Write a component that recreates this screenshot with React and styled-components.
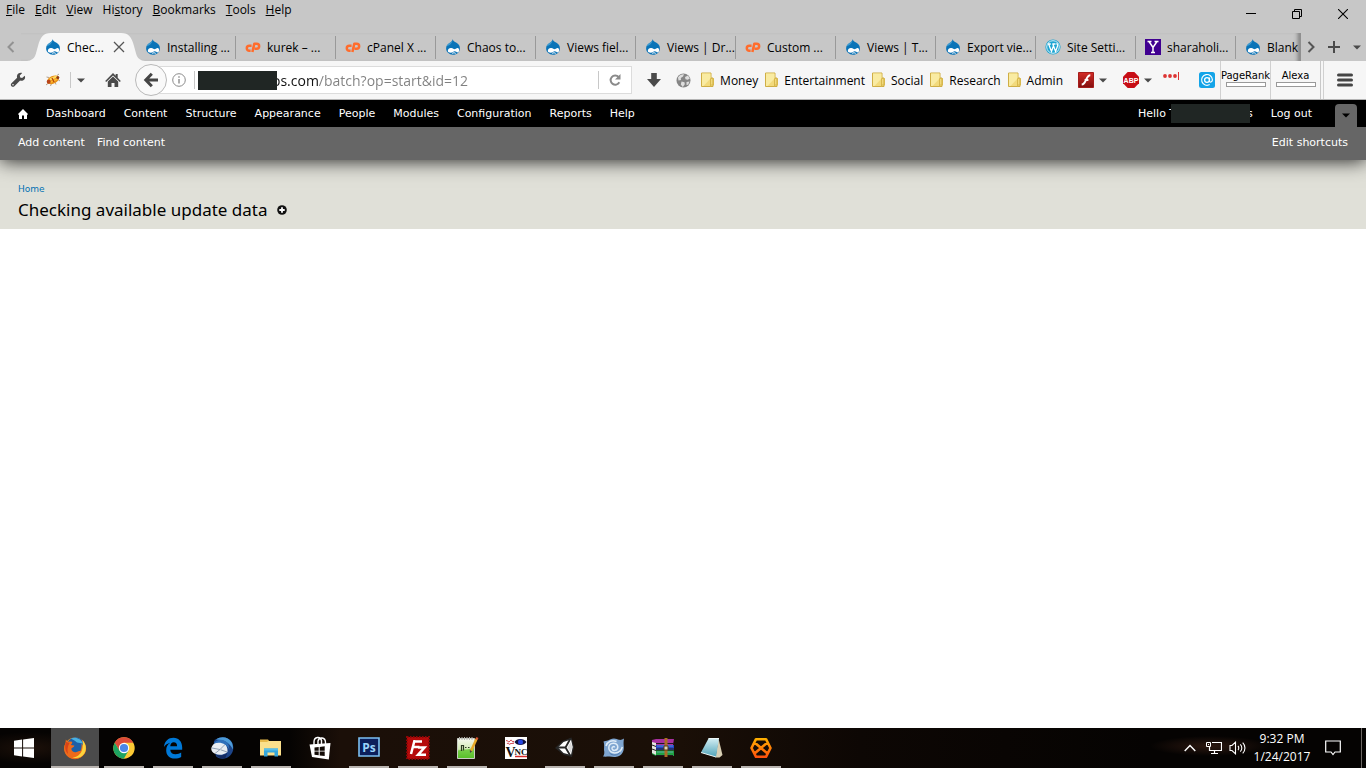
import React from 'react';
import styled, { createGlobalStyle, css } from 'styled-components'

const GlobalStyle = createGlobalStyle`
  * {
    box-sizing: border-box;
  }
  body {
    margin: 0;
    background: #fff;
    font-family: "Open Sans", "Noto Sans", sans-serif;
    font-size: 12px;
    color: #000;
  }
  button {
    font: inherit;
    color: inherit;
    background: none;
    border: 0;
    padding: 0;
  }
  a {
    color: inherit;
    text-decoration: none;
  }
  ul {
    list-style: none;
    margin: 0;
    padding: 0;
  }
  svg {
    display: block;
    flex: none;
  }
`

const Screen = styled.div`
  min-height: 100vh;
  display: flex;
  flex-direction: column;
`

/* ---------- browser window ---------- */

const Chrome = styled.header`
  position: relative;
  z-index: 2;
  background: #c7c7c7;
`

const TitleBar = styled.div`
  display: flex;
  justify-content: space-between;
  height: 33px;
`

const MenuBar = styled.ul`
  display: flex;
  gap: 10px;
  padding: 2px 6px;
  line-height: 16px;
`

const WindowButtons = styled.div`
  display: flex;
  height: 28px;
`

const WindowButton = styled.button`
  width: 46px;
  display: grid;
  place-items: center;
`

const TabStrip = styled.div`
  display: flex;
  height: 28px;
`

const StripButton = styled.button`
  width: ${props => props.$width}px;
  display: grid;
  place-items: center;
`

const Tabs = styled.ul`
  flex: 1;
  min-width: 0;
  display: flex;
  padding-left: 15px;
  overflow: hidden;
  border-right: 2px solid #8f8f8f;
  box-shadow: inset -4px 0 4px -3px #777;
`

const Tab = styled.li`
  position: relative;
  flex: none;
  width: 100px;
  display: flex;
  align-items: center;
  gap: 5px;
  padding-left: 9px;
  white-space: nowrap;

  ${props => !props.$active && css`
    &::after {
      content: '';
      position: absolute;
      right: 0;
      top: 3px;
      bottom: 2px;
      width: 1px;
      background: #999;
    }
  `}
`

const TabShape = styled.svg`
  position: absolute;
  left: -9px;
  top: 0;
`

const TabLink = styled.a`
  position: relative;
  display: flex;
  align-items: center;
  gap: 6px;
`

const TabClose = styled.button`
  position: relative;
  margin-left: 4px;
`

const Toolbar = styled.div`
  display: flex;
  align-items: center;
  height: 39px;
  background: #f6f6f6;
  border-bottom: 1px solid #b4b4b4;
`

const ToolButton = styled.button`
  flex: none;
  width: ${props => props.$width}px;
  display: flex;
  align-items: center;
  justify-content: center;
  gap: 5px;
`

const Divider = styled.span`
  flex: none;
  width: 1px;
  height: ${props => props.$height}px;
  background: #c8c8c8;
`

const BackButton = styled.button`
  position: relative;
  z-index: 1;
  flex: none;
  width: 32px;
  height: 32px;
  display: grid;
  place-items: center;
  border: 1px solid #b9b9b9;
  border-radius: 50%;
  background: #f9f9f9;
`

const AddressBar = styled.form`
  flex: 1;
  min-width: 0;
  height: 28px;
  display: flex;
  align-items: center;
  margin-left: -14px;
  padding-left: 14px;
  background: #fff;
  border: 1px solid #dcdcdc;
`

const Redacted = styled.span`
  position: relative;
  flex: none;
  width: 79px;
  height: 19px;
  background: #202624;
`

/* the host is dark, the path after it is grey */
const AddressInput = styled.input`
  flex: 1;
  min-width: 0;
  height: 24px;
  margin-left: -5px;
  padding: 0;
  border: 0;
  outline: 0;
  font: 14px "Open Sans", "Noto Sans", sans-serif;
  color: transparent;
  background: linear-gradient(90deg, #111 46px, #808080 46px);
  background-clip: text;
  -webkit-background-clip: text;
`

const Bookmarks = styled.ul`
  display: flex;
  gap: 6px;
  padding: 0 3px 0 9px;
`

const BookmarkLink = styled.a`
  display: flex;
  align-items: center;
  gap: 5px;
`

const RankBox = styled.div`
  flex: none;
  width: 50px;
  height: 38px;
  padding: 8px 0;
  border-left: 1px solid #d0d0d0;
  font: 10px/13px "DejaVu Sans", sans-serif;
  text-align: center;
  display: flex;
  flex-direction: column;
  align-items: center;
`

const RankMeter = styled.span`
  width: 40px;
  height: 5px;
  border: 1px solid #999;
  background: #fff;
`

const MenuButton = styled(ToolButton)`
  height: 38px;
  margin-left: 2px;
  border-left: 1px solid #d0d0d0;
`

/* ---------- drupal page ---------- */

const AdminToolbar = styled.div`
  position: relative;
  z-index: 1;
  font: 11px "DejaVu Sans", Verdana, sans-serif;
  color: #fff;
  box-shadow: 0 1px 18px rgba(0, 0, 0, 0.85);
`

const AdminBar = styled.nav`
  display: flex;
  justify-content: space-between;
  height: 27px;
  padding: 0 9px 0 18px;
  background: #000;
`

const AdminLinks = styled.ul`
  display: flex;
  align-items: center;
  gap: 18px;
`

const UserItem = styled.li`
  display: flex;
  align-items: center;

  ${Redacted} {
    margin: 0 -3px 0 -5px;
    z-index: 1;
  }
`

const ToggleItem = styled.li`
  align-self: flex-end;
  width: 22px;
  height: 23px;
  margin-left: 5px;
  display: grid;
  place-items: center;
  border-radius: 4px 4px 0 0;
  background: #666;
`

const ShortcutBar = styled.nav`
  display: flex;
  justify-content: space-between;
  height: 33px;
  padding: 9px 18px;
  line-height: 14px;
  background: #666;
`

const ShortcutLinks = styled.ul`
  display: flex;
  gap: 12px;
`

const PageHeader = styled.div`
  height: 69px;
  padding: 22px 18px 0;
  background: #e0e0d8;
`

const Breadcrumb = styled.a`
  display: block;
  font: 9px/14px "DejaVu Sans", Verdana, sans-serif;
  color: #0071b3;
`

const TitleRow = styled.div`
  display: flex;
  align-items: center;
  gap: 10px;
  margin-top: 3px;
`

const PageTitle = styled.h1`
  margin: 0;
  font: 17px/22px "Noto Sans", "Open Sans", sans-serif;
  color: #000;
`

const PageContent = styled.main`
  flex: 1;
  background: #fff;
`

/* ---------- taskbar ---------- */

const Taskbar = styled.footer`
  display: flex;
  justify-content: space-between;
  height: 40px;
  color: #fff;
  background:
    radial-gradient(ellipse 60px 10px at 1210px 18px, #2c1810, transparent),
    radial-gradient(ellipse 60px 16px at 30px 20px, #1c1009, transparent),
    linear-gradient(90deg, #050302 0, #050302 290px, #1b0f08 340px, #1a0f07 680px, #0d0704 860px, #050302 1150px);
`

const TaskList = styled.ul`
  display: flex;
  gap: 1px;
`

const TaskButton = styled.button`
  position: relative;
  width: ${props => (props.$start ? 50 : 48)}px;
  height: 40px;
  display: grid;
  place-items: center;
  padding-right: ${props => (props.$start ? 2 : 0)}px;
  background: ${props => (props.$active ? '#4b4b4b' : 'none')};

  ${props => props.$open && css`
    &::after {
      content: '';
      position: absolute;
      bottom: 0;
      left: ${props.$active ? 0 : 4}px;
      right: ${props.$active ? 0 : 4}px;
      height: 2px;
      background: #b9b4b0;
    }
  `}
`

const Tray = styled.div`
  display: flex;
  align-items: center;
`

const TrayButton = styled.button`
  width: ${props => props.$width}px;
  height: 40px;
  display: grid;
  place-items: center;
`

const Clock = styled.div`
  width: 64px;
  line-height: 18px;
  text-align: center;
`

const ShowDesktop = styled.button`
  width: 5px;
  height: 40px;
  border-left: 1px solid #6b6663;
`

/* ---------- icons ---------- */

const DrupalIcon = () => (
  <svg width="16" height="16" viewBox="0 0 16 16">
    <path d="M7.600.300C8 2 9.500 2.600 11.500 3.700 14 5.200 15 7 14.900 9.400 14.800 13 12 15.600 8 15.700 4 15.700 1.200 13 1.100 9.600 1 6.500 3 4.900 4.900 3.700 6.500 2.700 7.300 2 7.600.300z" fill="#0a74b8" />
    <path d="M7.600.300C7.300 2 6.500 2.700 4.900 3.700 3.500 4.600 2.200 5.700 1.500 7.300 4 6.500 7.500 5 7.600.300z" fill="#3f9bd0" />
    <path d="M2.800 12c0-2.300 1.900-3.300 3.600-3 1.500.1 2.300 1.200 3.100 1.200s2-1.500 3.300-1.300c1.700.3 1.700 3.800.3 4.400-1.100.5-2.100-1.100-3.300-1.100-1.300 0-2.300 1.500-4 1.500-1.600 0-3-.5-3-1.700z" fill="#fff" />
    <path d="M7.200 14.400c1-.8 2.500-.8 3.500 0" fill="none" stroke="#fff" strokeWidth="1" />
  </svg>
)

const CpanelIcon = () => (
  <svg width="16" height="16" viewBox="0 0 16 16" fill="none" stroke="#ff6c2c" strokeWidth="2.500">
    <path d="M6.600 6.800H4.300a2.500 2.500 0 0 0 0 5h1.300M7.400 13L9.300 4.800h2.400a2.400 2.400 0 0 1 0 4.900H9.600" strokeLinejoin="round" />
  </svg>
)

const WordpressIcon = () => (
  <svg width="16" height="16" viewBox="0 0 16 16">
    <circle cx="8" cy="8" r="7.600" fill="#1ea5d2" />
    <circle cx="8" cy="8" r="6.300" fill="none" stroke="#fff" strokeWidth=".8" />
    <path d="M2.800 5h3M7.300 5h3.200M3.600 5l2.900 7.400L8.200 7.500M7.800 5l2.800 7.400 2-5.500c.3-1-.6-1.700-.9-2.700" fill="none" stroke="#fff" strokeWidth="1.300" />
  </svg>
)

const YahooIcon = () => (
  <svg width="16" height="16" viewBox="0 0 16 16">
    <path d="M0 0h16v16H0z" fill="#400090" />
    <path d="M2.500 2.500h4M9.500 2.500h4M4 2.500l4 6 4-6M8 8v5.500M6 13.500h4" fill="none" stroke="#fff" strokeWidth="1.500" />
  </svg>
)

const Caret = ({ fill = '#4a4a4a' }) => (
  <svg width="8" height="5" viewBox="0 0 8 5"><path d="M0 .5h8L4 4.500z" fill={fill} /></svg>
)

const FolderIcon = () => (
  <svg width="15" height="16" viewBox="0 0 15 16">
    <path d="M1.500 1h9.500v5h2v8.500H1.500z" fill="#f2da7c" stroke="#cfae45" />
    <path d="M2 1.500h8.500v5L3.500 14H2z" fill="#f9eba2" />
    <path d="M10.500 6.500v8M10.500 6.500h3v6.500h-3" fill="none" stroke="#d8b84d" />
  </svg>
)

const WrenchIcon = () => (
  <svg width="16" height="16" viewBox="0 0 16 16">
    <path d="M14.700 3.700l-2.600 2.200-1.900-.5-.4-1.900L12.200 1C10.300.4 8.200 1 7.300 2.800c-.5 1-.5 2-.2 3L1.500 11.300c-.9.9-.9 2 0 2.900s2.100.8 2.900 0l5.700-5.600c1.500.5 3.200.1 4.200-1.100.9-1 1.100-2.500.4-3.800zM3 13.600a.8.8 0 1 1 0-1.600.8.8 0 0 1 0 1.600z" fill="#4a4a4a" />
  </svg>
)

const BugIcon = () => (
  <svg width="16" height="14" viewBox="0 0 16 14">
    <path d="M3.500 10L1 12M6.500 10.500l-1 2.500M10 9l1 2.500M13 6.500l2 1.500M4 4.500L1.500 4M12 2.500L14 1" stroke="#a08a70" strokeWidth=".8" />
    <ellipse cx="8" cy="6.800" rx="6.400" ry="3.800" transform="rotate(-24 8 6.800)" fill="#e8921a" />
    <path d="M4.500 5.500l6.500-3 2.500 1.300-8 3.700z" fill="#ffd95c" />
    <path d="M5 9.500l7-3.500" stroke="#ffb92e" strokeWidth="1.500" />
    <path d="M7 5l2 4" stroke="#b3450f" strokeWidth="1.200" />
    <circle cx="3.700" cy="8.800" r="2" fill="#b8431a" />
    <circle cx="12.800" cy="4.400" r="1.500" fill="#8f3a14" />
  </svg>
)

const HomeIcon = () => (
  <svg width="16" height="16" viewBox="0 0 16 16" fill="#4a4a4a">
    <path d="M8 1l2.700 2.700V2h2v3.700L15.800 9l-1 1L8 3.400 1.200 10l-1-1z" />
    <path d="M8 4.600l5.200 5V15H9.500v-4h-3v4H2.800V9.600z" />
  </svg>
)

const BackIcon = () => (
  <svg width="16" height="16" viewBox="0 0 16 16" fill="none" stroke="#454545" strokeWidth="3">
    <path d="M8.800 1.800L2.800 8l6 6.200M3.500 8H15" />
  </svg>
)

const InfoIcon = () => (
  <svg width="14" height="14" viewBox="0 0 14 14" fill="none" stroke="#8b8b8b">
    <circle cx="7" cy="7" r="6.300" />
    <path d="M7 6v4.500M7 3.200v1.600" strokeWidth="1.400" />
  </svg>
)

const ReloadIcon = () => (
  <svg width="14" height="14" viewBox="0 0 14 14">
    <path d="M11.300 9.300A4.600 4.600 0 1 1 10.600 4" fill="none" stroke="#8a8a8a" strokeWidth="2" />
    <path d="M12.500 1v5.500H7z" fill="#8a8a8a" />
  </svg>
)

const DownloadIcon = () => (
  <svg width="16" height="16" viewBox="0 0 16 16"><path d="M5.200 1h5.600v6H15l-7 8-7-8h4.200z" fill="#4a4a4a" /></svg>
)

const GlobeIcon = () => (
  <svg width="15" height="15" viewBox="0 0 15 15">
    <circle cx="7.500" cy="7.500" r="7" fill="#858585" />
    <path d="M2 4.500C3.500 2 6 1 8 1.200L7 3.500 4.800 5 5 7 2.500 7.500zM9 4l3-1.500 1.800 3-2 1.300-2.300-.6zM5.500 8.500l3 .8.300 2-2 2.700-2-2.500zM10.500 9l3-.5-1.300 3.300-1.700.2z" fill="#dedede" />
  </svg>
)

const FlashIcon = () => (
  <svg width="16" height="16" viewBox="0 0 16 16">
    <defs>
      <linearGradient id="flash" x1="0" y1="0" x2="0" y2="1">
        <stop offset="0" stopColor="#d42b26" />
        <stop offset="1" stopColor="#820f0f" />
      </linearGradient>
    </defs>
    <path d="M.5.500h15v15H.5z" fill="url(#flash)" stroke="#a51d1b" />
    <path d="M12.300 3.300c-4.500 0-4 9-8.600 9.200M6.600 8.100h3.800" fill="none" stroke="#fff" strokeWidth="2" />
  </svg>
)

const AdblockIcon = () => (
  <svg width="16" height="16" viewBox="0 0 16 16">
    <path d="M4.700 0h6.600L16 4.700v6.600L11.300 16H4.700L0 11.300V4.700z" fill="#c70d15" />
    <text x="8" y="10.700" fill="#fff" fontSize="7" fontWeight="700" fontFamily="Liberation Sans" textAnchor="middle">ABP</text>
  </svg>
)

const DotsIcon = () => (
  <svg width="24" height="16" viewBox="0 0 24 16">
    <g fill="#dd3433">
      <circle cx="2" cy="4" r="1.900" />
      <circle cx="7" cy="4" r="1.900" />
      <circle cx="12" cy="4" r="1.900" />
      <path d="M15 0h1v8h-1z" />
    </g>
  </svg>
)

const AtIcon = () => (
  <svg width="16" height="16" viewBox="0 0 16 16">
    <rect width="16" height="16" rx="2.500" fill="#13a4e8" />
    <circle cx="8" cy="8" r="2.400" fill="none" stroke="#fff" strokeWidth="1.300" />
    <path d="M10.500 5.500v3.700c.3 1.500 2.900 1 2.900-1.400A5.400 5.400 0 1 0 10.700 12.600" fill="none" stroke="#fff" strokeWidth="1.200" />
  </svg>
)

const BurgerIcon = () => (
  <svg width="16" height="14" viewBox="0 0 16 14"><path d="M1.500 2h13M1.500 7h13M1.500 12h13" stroke="#454545" strokeWidth="3" strokeLinecap="round" /></svg>
)

const WindowsIcon = () => (
  <svg width="20" height="20" viewBox="0 0 20 20" fill="#fff">
    <path d="M0 2.700l8.100-1.100v7.900H0zM9.100 1.500L20 0v9.500H9.100zM0 10.500h8.100v7.900L0 17.300zM9.100 10.500H20V20L9.100 18.500z" />
  </svg>
)

const FirefoxIcon = () => (
  <svg width="24" height="24" viewBox="0 0 24 24">
    <circle cx="12" cy="12.300" r="10.700" fill="#f08a1d" />
    <circle cx="12.500" cy="9.800" r="8.600" fill="#1c5fa8" />
    <path d="M8 2.500c5-2 10 .5 12 5l-6-1c-2-2-4-2.500-6-4z" fill="#49b0e0" />
    <path d="M19 3.600c4 3.800 5.500 9.500 2.600 14.200C18.500 23 12 24.500 7 22c-5.500-2.800-7.500-9.300-4.500-15l.3-3.500L5 6c1.500-.6 3-.4 4.300 0 0 1-.5 2-1.500 3l3.500.5c.2 1.500-2.300 2-3 3.300.3 2.700 2.700 4 5.200 3.300 1.500-.5 2.500-1.500 4-1 .8-3 1.500-5 .8-7.500 1 .7 1.400 1.600 1.700 2.500.3-2.500-.2-4.800-1-6.500z" fill="#ee6a1b" />
    <path d="M19.500 4c3.500 4 4.500 9 2 13.300-2.800 4.500-8 5.700-12 4.200 6-.2 10-5 10.200-11.500.2-2 .3-4-.2-6z" fill="#fbd43c" />
    <path d="M3 6c-1.500 4-.8 9 2 12-1-4-.5-8 1.500-11z" fill="#d94318" />
  </svg>
)

const ChromeIcon = () => (
  <svg width="22" height="22" viewBox="0 0 22 22">
    <circle cx="11" cy="11" r="10.700" fill="#fcc934" />
    <path d="M1.700 5.700A10.700 10.700 0 0 1 20.300 5.700H11L6.400 13.600z" fill="#dd4b39" />
    <path d="M1.700 5.700A10.700 10.700 0 0 0 10.800 21.700L15.600 13.600 6.400 13.600z" fill="#1da462" />
    <circle cx="11" cy="11" r="5.200" fill="#fff" />
    <circle cx="11" cy="11" r="4.100" fill="#4a86e8" />
  </svg>
)

const EdgeIcon = () => (
  <svg width="20" height="22" viewBox="0 0 22 22" preserveAspectRatio="none">
    <path d="M1 10C1.700 4 6 .7 11.500.7c5.800 0 9.600 3.900 9.600 9.500v2.500H8c.2 3 2.600 4.500 5.800 4.500 2.400 0 4.300-.6 6.200-1.700v4.400c-2 1.100-4.400 1.600-7 1.600-6 0-9.500-3.300-9.500-8.300 0-3.400 1.700-5.800 4.500-7.400C5 6.500 2.600 8 1 10zm7-.8h7.500c0-2.500-1.300-4-3.700-4C9.600 5.200 8.300 6.700 8 9.200z" fill="#0078d7" />
  </svg>
)

const ThunderbirdIcon = () => (
  <svg width="24" height="24" viewBox="0 0 24 24">
    <path d="M4 5C9-.5 18 .3 21.700 6c2.600 4.200 2 10-1.500 13.600-4 4-10 4.300-14 1L3.500 12z" fill="#1d4488" />
    <path d="M6 3.500C11-.5 18.500.8 21.500 6c1.200 2.200 1.700 5 1.200 7.500C20.500 7.500 14.500 3.500 6 3.500z" fill="#4d9bd8" />
    <path d="M1.300 12.500c.5-4 5-7.300 9.700-6.700 4.200.5 7 5.200 6.500 10.200-3.500 3-8.500 3.700-12.500 1.700-2.500-1.200-4-3-3.700-5.200z" fill="#e9edf2" />
    <path d="M2 12l8 1.500 5.500-5.500M10 13.500l-5 4M10.500 13.700l6.500 2.300" fill="none" stroke="#8898ad" strokeWidth=".9" />
    <path d="M4 7.500C7 2.500 15 2.500 18.500 8.500l1 5.500C16.500 8 11 5.500 4 7.500z" fill="#2f70ba" />
    <path d="M6 18.600c4 1.700 8.500 1 11.300-1.800l-1.800 5C12 23.500 8 22 6 18.600z" fill="#142a60" />
  </svg>
)

const ExplorerIcon = () => (
  <svg width="22" height="20" viewBox="0 0 22 20">
    <path d="M0 1.500h8l1.500 2H20V6H0z" fill="#e8b94a" />
    <path d="M0 4h7l1.500-1H21v14.500H0z" fill="#fbe08c" />
    <path d="M4 10.500h14V18.500h-3.500v-4h-7v4H4z" fill="#35a7dc" />
    <path d="M4 10.500h14v2H4z" fill="#59bfe9" />
  </svg>
)

const StoreIcon = () => (
  <svg width="22" height="24" viewBox="0 0 22 24">
    <path d="M5 9V6c0-5.500 6.500-6 7.500-1.500V8M9 8V5c1-4.500 7.500-4 7.500 1.500V8" fill="none" stroke="#fff" strokeWidth="1.400" />
    <path d="M.5 8.500L21.500 7l-1.700 16.500L3 21z" fill="#fff" />
    <path d="M5.500 11.500l4.200-.5v3.700H5.500zM10.700 10.900l5-.6v4.400h-5zM5.500 15.600h4.200v3.700l-4.200-.5zM10.700 15.600h5V20l-5-.6z" fill="#130b06" />
  </svg>
)

const PhotoshopIcon = () => (
  <svg width="22" height="22" viewBox="0 0 22 22">
    <path d="M1 1h20v18H1z" fill="#0c1f5c" stroke="#7cc0f2" strokeWidth="1.600" />
    <text x="11" y="14.500" fill="#9bd3fb" fontSize="12" fontWeight="700" fontFamily="Open Sans" textAnchor="middle">Ps</text>
  </svg>
)

const FilezillaIcon = () => (
  <svg width="24" height="24" viewBox="0 0 24 24">
    <path d="M1 1h22v22H1z" fill="#b50a0a" stroke="#8e0606" strokeWidth="2" strokeDasharray="1.500 1.500" />
    <path d="M7.500 5.500H16M8.500 4.500L5 18M6.500 11h7M12 11.500h6.500L12 18.800h8" fill="none" stroke="#fff" strokeWidth="2.500" />
  </svg>
)

const NotepadPlusIcon = () => (
  <svg width="24" height="24" viewBox="0 0 24 24">
    <defs>
      <linearGradient id="npp" x1="0" y1="0" x2="0" y2="1">
        <stop offset="0" stopColor="#f6f8f0" />
        <stop offset=".5" stopColor="#d5ecb8" />
        <stop offset="1" stopColor="#3fae1e" />
      </linearGradient>
    </defs>
    <path d="M2.500 2.500h17V22.500h-17z" fill="url(#npp)" stroke="#c9cdc4" />
    <path d="M3 14.500c6-1.500 11-.5 16-3v10.500H3z" fill="#5fc52c" opacity=".75" />
    <path d="M4.500 1v3M7 1v3M9.500 1v3M12 1v3M14.500 1v3M17 1v3" stroke="#b5b5b0" />
    <path d="M6.500 9v6M6.500 9.500h2v5M10 11.500h1.500M13 11.500h1.500" fill="none" stroke="#2d3b22" strokeWidth="1.200" />
    <path d="M21.500 3L16 15" stroke="#e7a928" strokeWidth="2.500" />
    <path d="M21 2l2 1" stroke="#d85332" strokeWidth="2" />
    <path d="M15 17l-.2-3 2.300 1.200z" fill="#444" />
  </svg>
)

const VncIcon = () => (
  <svg width="24" height="24" viewBox="0 0 24 24">
    <path d="M1 1h22v22H1z" fill="#fff" />
    <path d="M10.500 6c2-4 9.500-4 12 0-2.500 4-10 4-12 0z" fill="#10103c" />
    <circle cx="16.500" cy="6" r="2.500" fill="#2545e0" />
    <path d="M2 5c2-2 2 3 4 0s2 3 4 0M3 8c1-2 2 1 3 0s2 0 4-1" fill="none" stroke="#c8202b" />
    <text x="1.500" y="21" fill="#111" fontSize="14" fontWeight="700" fontFamily="Liberation Serif">V</text>
    <text x="10.500" y="18.500" fill="#111" fontSize="9" fontWeight="700" fontFamily="Liberation Serif">NC</text>
    <path d="M11 20.500h12" stroke="#d62a2a" strokeWidth="1.500" />
  </svg>
)

const UnityIcon = () => (
  <svg width="22" height="22" viewBox="0 0 22 22">
    <path d="M17.500.5L20 10l-2 10-8-2L1 11l7.500-7z" fill="#262626" />
    <path d="M17 2.500L18.700 10 17 18l-7.500-2L4 10.500 9.500 5z" fill="#fff" />
    <path d="M3 10.500h8.500M11.500 10.500l5-9M11.500 10.500l5 8.500" stroke="#262626" strokeWidth="1.800" />
    <path d="M13.500 10.500L16.700 5 18.300 10 16.700 16z" fill="#d9d9d9" />
  </svg>
)

const SwirlIcon = () => (
  <svg width="22" height="22" viewBox="0 0 22 22">
    <path d="M.5 4.500C3 4 5 3.500 7 2.500c4-2 7-.5 9 .3 1.600.5 3.500-.3 5-1.300-.5 3-.5 5-.3 7.500.5 4-.7 8-4.700 10-4 1.700-7 .7-9.500.5-2 0-4.500.3-6.500 0 1.500-2 1.500-4 1-6.500C1 10 1.500 7 .5 4.500z" fill="#7fa6d1" />
    <path d="M11.500 10.500c0-1.500-2.500-1-2.500.8 0 3.200 5.800 2.700 5.800-1.300 0-5.200-9-5-9 1 0 6.500 11.500 7 13.500-1M3 9C4.500 4.500 9 2.500 13.500 4.500" fill="none" stroke="#dfecf8" strokeWidth="1.500" />
    <path d="M6.500 16c3 3 8 2.500 10.500-.5" fill="none" stroke="#4a78ae" />
  </svg>
)

const WinrarIcon = () => (
  <svg width="24" height="20" viewBox="0 0 24 20">
    <path d="M1 2l4-1h18l-1 6H1z" fill="#a8309f" />
    <path d="M1 7h22v5H1z" fill="#2447c7" />
    <path d="M1 12.500h22V18H5l-4-2z" fill="#21a344" />
    <path d="M1 4l4 1v12l-4-2z" fill="#e5e5df" />
    <path d="M5 5.500h18M5 11h18M5 17.500h17M1 7l4 1.500M1 11l4 1.500" stroke="#201a20" />
    <path d="M6 8h16M6 14h16" stroke="#86b7ed" strokeWidth=".6" />
    <path d="M13.500 0h3v19h-3z" fill="#ad6d25" />
    <path d="M13 8h4v4h-4z" fill="#ddd5b8" stroke="#5a3c17" />
  </svg>
)

const NotepadIcon = () => (
  <svg width="24" height="24" viewBox="0 0 24 24">
    <defs>
      <linearGradient id="pad" x1="0" y1="0" x2="0" y2="1">
        <stop offset="0" stopColor="#d3eef3" />
        <stop offset="1" stopColor="#4fa3b8" />
      </linearGradient>
    </defs>
    <path d="M18.500 2.500L22.500 19l-3 2.500h-4z" fill="#d8cfb4" />
    <path d="M8.500 2.500h10.500L16 21 1 16.500z" fill="url(#pad)" />
    <path d="M8.500 2.500h10.500M1 16.500L16 21" stroke="#edf8f8" />
  </svg>
)

const XIcon = () => (
  <svg width="24" height="22" viewBox="0 0 24 22">
    <defs>
      <linearGradient id="xgrad" gradientUnits="userSpaceOnUse" x1="0" y1="1" x2="0" y2="21">
        <stop offset="0" stopColor="#ffb300" />
        <stop offset="1" stopColor="#ff4d0d" />
      </linearGradient>
    </defs>
    <path d="M7 2.200h10L21.500 11 17 19.800H7L2.500 11zM5.500 5.500l13 11M18.500 5.500l-13 11" fill="none" stroke="url(#xgrad)" strokeWidth="2.600" strokeLinejoin="round" />
  </svg>
)

/* ---------- data ---------- */

// [text before the access key, access key, text after it]
const menus = [
  ['', 'F', 'ile'],
  ['', 'E', 'dit'],
  ['', 'V', 'iew'],
  ['Hi', 's', 'tory'],
  ['', 'B', 'ookmarks'],
  ['', 'T', 'ools'],
  ['', 'H', 'elp'],
]

const tabs = [
  { title: 'Chec...', Icon: DrupalIcon, active: true },
  { title: 'Installing ...', Icon: DrupalIcon },
  { title: 'kurek – ...', Icon: CpanelIcon },
  { title: 'cPanel X ...', Icon: CpanelIcon },
  { title: 'Chaos to...', Icon: DrupalIcon },
  { title: 'Views fiel...', Icon: DrupalIcon },
  { title: 'Views | Dr...', Icon: DrupalIcon },
  { title: 'Custom ...', Icon: CpanelIcon },
  { title: 'Views | T...', Icon: DrupalIcon },
  { title: 'Export vie...', Icon: DrupalIcon },
  { title: 'Site Setti...', Icon: WordpressIcon },
  { title: 'sharaholi...', Icon: YahooIcon },
  { title: 'Blank', Icon: DrupalIcon },
]

const bookmarks = ['Money', 'Entertainment', 'Social', 'Research', 'Admin']

const adminLinks = ['Dashboard', 'Content', 'Structure', 'Appearance', 'People', 'Modules', 'Configuration', 'Reports', 'Help']

const tasks = [
  { name: 'Firefox', Icon: FirefoxIcon, open: true, active: true },
  { name: 'Chrome', Icon: ChromeIcon, open: true },
  { name: 'Edge', Icon: EdgeIcon, open: true },
  { name: 'Thunderbird', Icon: ThunderbirdIcon, open: true },
  { name: 'File Explorer', Icon: ExplorerIcon, open: true },
  { name: 'Store', Icon: StoreIcon },
  { name: 'Photoshop', Icon: PhotoshopIcon, open: true },
  { name: 'FileZilla', Icon: FilezillaIcon, open: true },
  { name: 'Notepad++', Icon: NotepadPlusIcon, open: true },
  { name: 'VNC', Icon: VncIcon },
  { name: 'Unity', Icon: UnityIcon, open: true },
  { name: 'Nautilus', Icon: SwirlIcon, open: true },
  { name: 'WinRAR', Icon: WinrarIcon, open: true },
  { name: 'Notepad', Icon: NotepadIcon, open: true },
  { name: 'XAMPP', Icon: XIcon, open: true },
]

function BrowserChrome() {
  return (
    <Chrome>
      <TitleBar>
        <MenuBar>
          {menus.map(([before, key, after]) => (
            <li key={key + after}><button>{before}<u>{key}</u>{after}</button></li>
          ))}
        </MenuBar>
        <WindowButtons>
          <WindowButton aria-label='Minimize'>
            <svg width="10" height="10" viewBox="0 0 10 10"><path d="M0 4.500h10" stroke="#000" /></svg>
          </WindowButton>
          <WindowButton aria-label='Restore'>
            <svg width="10" height="10" viewBox="0 0 10 10" fill="none" stroke="#000"><path d="M.5 2.500h7v7h-7zM2.500 2.500v-2h7v7h-2" /></svg>
          </WindowButton>
          <WindowButton aria-label='Close'>
            <svg width="10" height="10" viewBox="0 0 10 10"><path d="M0 0l10 10M10 0L0 10" stroke="#000" strokeWidth="1.100" /></svg>
          </WindowButton>
        </WindowButtons>
      </TitleBar>

      <TabStrip>
        <StripButton $width={21} aria-label='Scroll tabs left'>
          <svg width="8" height="12" viewBox="0 0 8 12"><path d="M6.500 1L1.500 6l5 5" fill="none" stroke="#929292" strokeWidth="2" /></svg>
        </StripButton>
        <Tabs>
          {tabs.map(({ title, Icon, active }, i) => (
            <Tab key={i} $active={active}>
              {active && (
                <TabShape width="118" height="28" viewBox="0 0 118 28">
                  <path d="M0 28c9-1 8.500-7 11-15C13.500 4 16 0 24 0h70c8 0 10.500 4 13 13 2.500 8 2 14 11 15z" fill="#f6f6f6" />
                </TabShape>
              )}
              <TabLink href='#'><Icon />{title}</TabLink>
              {active && (
                <TabClose aria-label='Close tab'>
                  <svg width="12" height="12" viewBox="0 0 12 12"><path d="M1 1l10 10M11 1L1 11" stroke="#555" strokeWidth="1.300" /></svg>
                </TabClose>
              )}
            </Tab>
          ))}
        </Tabs>
        <StripButton $width={20} aria-label='Scroll tabs right'>
          <svg width="8" height="12" viewBox="0 0 8 12"><path d="M1.500 1l5 5-5 5" fill="none" stroke="#555" strokeWidth="2" /></svg>
        </StripButton>
        <StripButton $width={26} aria-label='New tab'>
          <svg width="12" height="12" viewBox="0 0 12 12"><path d="M6 0v12M0 6h12" stroke="#4a4a4a" strokeWidth="2" /></svg>
        </StripButton>
        <StripButton $width={19} aria-label='List all tabs'><Caret /></StripButton>
      </TabStrip>

      <Toolbar>
        <ToolButton $width={36} aria-label='Developer tools'><WrenchIcon /></ToolButton>
        <ToolButton $width={34} aria-label='Firebug'><BugIcon /></ToolButton>
        <Divider $height={16} />
        <ToolButton $width={20} aria-label='Firebug options'><Caret /></ToolButton>
        <ToolButton $width={44} aria-label='Home'><HomeIcon /></ToolButton>
        <BackButton aria-label='Back'><BackIcon /></BackButton>
        <AddressBar onSubmit={e => e.preventDefault()}>
          <ToolButton $width={22} type='button' aria-label='Site information'><InfoIcon /></ToolButton>
          <ToolButton as='span' $width={8}><Divider $height={18} /></ToolButton>
          <Redacted />
          <AddressInput aria-label='Address' defaultValue='os.com/batch?op=start&id=12' />
          <Divider $height={18} />
          <ToolButton $width={32} type='button' aria-label='Reload'><ReloadIcon /></ToolButton>
        </AddressBar>
        <ToolButton $width={43} aria-label='Downloads'><DownloadIcon /></ToolButton>
        <ToolButton $width={16} aria-label='Web'><GlobeIcon /></ToolButton>
        <Bookmarks>
          {bookmarks.map(name => (
            <li key={name}><BookmarkLink href='#'><FolderIcon />{name}</BookmarkLink></li>
          ))}
        </Bookmarks>
        <ToolButton $width={52} aria-label='Flash'><FlashIcon /><Caret /></ToolButton>
        <ToolButton $width={38} aria-label='Adblock'><AdblockIcon /><Caret /></ToolButton>
        <ToolButton $width={38} aria-label='Passwords'><DotsIcon /></ToolButton>
        <ToolButton $width={26} aria-label='Mail'><AtIcon /></ToolButton>
        <RankBox>PageRank<RankMeter /></RankBox>
        <RankBox>Alexa<RankMeter /></RankBox>
        <Divider $height={38} />
        <MenuButton $width={43} aria-label='Open menu'><BurgerIcon /></MenuButton>
      </Toolbar>
    </Chrome>
  )
}

function AdminPage() {
  return (
    <>
      <AdminToolbar>
        <AdminBar>
          <AdminLinks>
            <li>
              <a href='#' aria-label='Home'>
                <svg width="10" height="10" viewBox="0 0 10 10" fill="#fff"><path d="M5 0l5 5-.8.900L9 5.700V10H6V6.500H4V10H1V5.700l-.2.200L0 5z" /></svg>
              </a>
            </li>
            {adminLinks.map(name => <li key={name}><a href='#'>{name}</a></li>)}
          </AdminLinks>
          <AdminLinks>
            <UserItem>Hello T<Redacted />s</UserItem>
            <li><a href='#'>Log out</a></li>
            <ToggleItem>
              <button aria-label='Hide shortcuts'><Caret fill='#000' /></button>
            </ToggleItem>
          </AdminLinks>
        </AdminBar>
        <ShortcutBar>
          <ShortcutLinks>
            <li><a href='#'>Add content</a></li>
            <li><a href='#'>Find content</a></li>
          </ShortcutLinks>
          <a href='#'>Edit shortcuts</a>
        </ShortcutBar>
      </AdminToolbar>
      <PageHeader>
        <Breadcrumb href='#'>Home</Breadcrumb>
        <TitleRow>
          <PageTitle>Checking available update data</PageTitle>
          <button aria-label='Add to shortcuts'>
            <svg width="10" height="10" viewBox="0 0 10 10"><circle cx="5" cy="5" r="4.800" fill="#111" /><path d="M5 2.300v5.400M2.300 5h5.400" stroke="#fff" strokeWidth="1.800" /></svg>
          </button>
        </TitleRow>
      </PageHeader>
      <PageContent />
    </>
  )
}

function WindowsTaskbar() {
  return (
    <Taskbar>
      <TaskList>
        <li><TaskButton $start aria-label='Start'><WindowsIcon /></TaskButton></li>
        {tasks.map(({ name, Icon, open, active }) => (
          <li key={name}>
            <TaskButton $open={open} $active={active} aria-label={name}><Icon /></TaskButton>
          </li>
        ))}
      </TaskList>
      <Tray>
        <TrayButton $width={24} aria-label='Show hidden icons'>
          <svg width="12" height="8" viewBox="0 0 12 8"><path d="M.7 7L6 1.500 11.300 7" fill="none" stroke="#fff" strokeWidth="1.400" /></svg>
        </TrayButton>
        <TrayButton $width={24} aria-label='Network'>
          <svg width="16" height="14" viewBox="0 0 16 14" fill="none" stroke="#fff">
            <path d="M6 1.500h9.500v8H3.500V6M8.500 9.500V12M5 12.500h7" strokeWidth="1.200" />
            <path d="M.5 1.500h4v4h-4zM2 3.500h1" />
          </svg>
        </TrayButton>
        <TrayButton $width={24} aria-label='Volume'>
          <svg width="18" height="14" viewBox="0 0 18 14" fill="none" stroke="#fff" strokeWidth="1.100">
            <path d="M1 4.500h2L6.500 1.200v11.600L3 9.500H1zM9 5c1 1 1 3 0 4M11.300 3.300c2 2 2 5.400 0 7.400M13.700 1.700c3 3 3 7.600 0 10.600" />
          </svg>
        </TrayButton>
        <Clock>9:32 PM<br />1/24/2017</Clock>
        <TrayButton $width={38} aria-label='Notifications'>
          <svg width="16" height="16" viewBox="0 0 16 16"><path d="M.7 1h14.600v11H10l-2 2.500L6 12H.7z" fill="none" stroke="#fff" strokeWidth="1.200" /></svg>
        </TrayButton>
        <TrayButton as='span' $width={9} />
        <ShowDesktop aria-label='Show desktop' />
      </Tray>
    </Taskbar>
  )
}

function App() {
  return (
    <Screen>
      <GlobalStyle />
      <BrowserChrome />
      <AdminPage />
      <WindowsTaskbar />
    </Screen>
  );
}

export default App;
